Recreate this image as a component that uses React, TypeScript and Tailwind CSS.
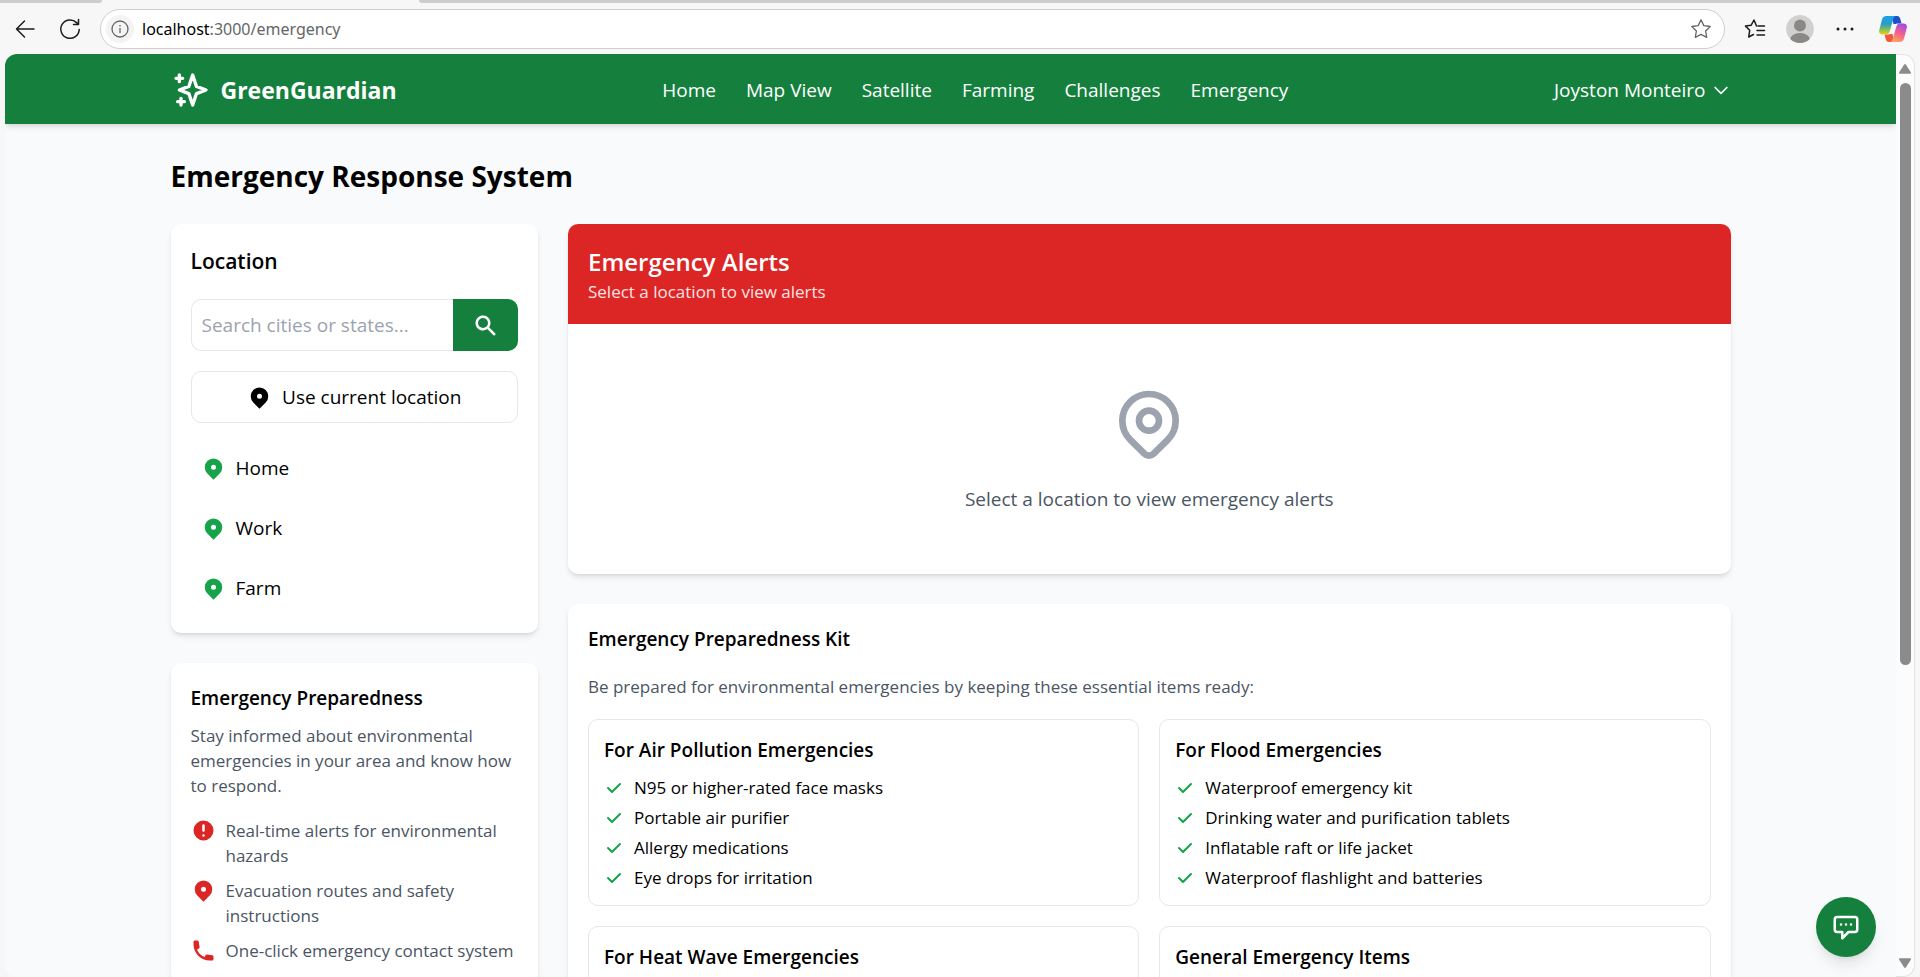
import React from "react";
import {
  HiCheck,
  HiExclamationCircle,
  HiLocationMarker,
  HiOutlineChatAlt,
  HiOutlineChevronDown,
  HiOutlineLocationMarker,
  HiOutlineSparkles,
  HiPhone,
  HiSearch,
} from "react-icons/hi";

const navLinks = ["Home", "Map View", "Satellite", "Farming", "Challenges", "Emergency"];

const savedPlaces = ["Home", "Work", "Farm"];

const features = [
  { icon: HiExclamationCircle, text: "Real-time alerts for environmental hazards" },
  { icon: HiLocationMarker, text: "Evacuation routes and safety instructions" },
  { icon: HiPhone, text: "One-click emergency contact system" },
];

const kits = [
  {
    title: "For Air Pollution Emergencies",
    items: ["N95 or higher-rated face masks", "Portable air purifier", "Allergy medications", "Eye drops for irritation"],
  },
  {
    title: "For Flood Emergencies",
    items: [
      "Waterproof emergency kit",
      "Drinking water and purification tablets",
      "Inflatable raft or life jacket",
      "Waterproof flashlight and batteries",
    ],
  },
  { title: "For Heat Wave Emergencies", items: [] },
  { title: "General Emergency Items", items: [] },
];

const starPath = "M12 2.8l2.8 5.8 6.4.9-4.6 4.5 1.1 6.3L12 17.3l-5.7 3 1.1-6.3-4.6-4.5 6.4-.9z";

function CopilotLogo() {
  return (
    <svg viewBox="0 0 28 26" className="h-[26px] w-7" aria-hidden="true">
      <defs>
        <linearGradient id="cpLeft" x1="0" y1="0" x2="0" y2="1">
          <stop offset="0" stopColor="#1a9ef0" />
          <stop offset="0.45" stopColor="#2b9fc0" />
          <stop offset="0.75" stopColor="#8cc152" />
          <stop offset="1" stopColor="#e8d21d" />
        </linearGradient>
        <linearGradient id="cpRight" x1="0.7" y1="0" x2="0.3" y2="1">
          <stop offset="0" stopColor="#a04be8" />
          <stop offset="0.5" stopColor="#f2608f" />
          <stop offset="1" stopColor="#ffa65a" />
        </linearGradient>
      </defs>
      <path d="M13 0h5c2 0 2.700 1 3.300 3l1.200 4.500h-4c-2 0-3 1-3.600 3z" fill="#1c50c8" />
      <path d="M15 26h-5c-2 0-2.700-1-3.300-3L5.500 18.500h4c2 0 3-1 3.600-3z" fill="#ee5a3a" />
      <path
        d="M7.500 0H17c-1.500 0-2.200 1.500-2.800 3.500l-3.400 11.500c-.7 2.400-1.800 3.500-4 3.500H4c-3.500 0-4.500-2-3.600-5L3 3.500C3.700 1.200 5 0 7.500 0z"
        fill="url(#cpLeft)"
      />
      <path
        d="M20.500 26H11c1.500 0 2.200-1.500 2.800-3.500L17.200 11c.7-2.400 1.800-3.500 4-3.500H24c3.500 0 4.500 2 3.600 5L25 22.500c-.7 2.300-2 3.500-4.500 3.500z"
        fill="url(#cpRight)"
      />
      <path d="M14.800 8h3.200c-.8.6-1.200 1.600-1.600 3l-1.600 5.500c-.4 1.200-.9 1.500-1.600 1.500h-3c.8-.6 1.200-1.600 1.600-3l1.600-5.500c.3-1 .8-1.500 1.400-1.500z" fill="#f7f7f7" />
    </svg>
  );
}

function BrowserBar() {
  return (
    <div className="flex h-[54px] shrink-0 flex-col bg-[#f7f7f7]">
      <div className="flex h-[3px] shrink-0">
        <div className="w-[102px] shrink-0 rounded-br-md bg-[#cdcdcd]" />
        <div className="ml-[317px] flex-1 rounded-bl-md bg-[#cdcdcd]" />
      </div>
      <div className="flex items-center pt-[6px] pl-[14px]">
        <button aria-label="Back" className="flex size-6 items-center justify-center">
          <svg viewBox="0 0 24 24" className="size-6" fill="none" stroke="#1b1b1b" strokeWidth="1.500" strokeLinecap="round" strokeLinejoin="round">
            <path d="M20 12H3M10.500 4L2.500 12l8 8" />
          </svg>
        </button>
        <button aria-label="Refresh" className="ml-5 flex size-6 items-center justify-center">
          <svg viewBox="0 0 24 24" className="size-6" fill="none" stroke="#1b1b1b" strokeWidth="1.500" strokeLinecap="round" strokeLinejoin="round">
            <path d="M21.200 12.500A9.200 9.200 0 1 1 18.500 5.600l1.500 1.600M20.500 2.500v5h-5" />
          </svg>
        </button>
        <div className="ml-[18px] flex h-10 flex-1 items-center rounded-full border border-[#cfcfcf] bg-white pr-[11px] pl-[5px]">
          <span className="flex size-7 items-center justify-center rounded-full bg-[#f3f3f3]">
            <svg viewBox="0 0 18 18" className="size-[18px]" fill="none" stroke="#666" strokeWidth="1.300">
              <circle cx="9" cy="9" r="8" />
              <path d="M9 8v5M9 5v1.400" />
            </svg>
          </span>
          <span className="ml-2 flex-1 font-['Noto_Sans',sans-serif] text-[16px] leading-6 text-[#666]">
            <span className="text-black">localhost</span>:3000/emergency
          </span>
          <button aria-label="Add to favourites">
            <svg viewBox="0 0 24 24" className="size-6" fill="none" stroke="#666" strokeWidth="1.300" strokeLinejoin="round">
              <path d={starPath} />
            </svg>
          </button>
        </div>
        <button aria-label="Favourites" className="ml-[18px]">
          <svg viewBox="0 0 24 24" className="size-6" fill="none" stroke="#1b1b1b" strokeWidth="1.500" strokeLinecap="round" strokeLinejoin="round">
            <path d="M13.500 9L11 3 8.200 8.200l-5.700.9 4.200 4.200-1 6.700 4.800-2.500M15 9h6.500M14 13.500h7.500M14 18h7.500" />
          </svg>
        </button>
        <button aria-label="Profile" className="ml-[19px]">
          <svg viewBox="0 0 28 28" className="size-7">
            <clipPath id="avatarClip">
              <circle cx="14" cy="14" r="14" />
            </clipPath>
            <g clipPath="url(#avatarClip)">
              <circle cx="14" cy="14" r="14" fill="#d2d0ce" />
              <circle cx="14" cy="10.500" r="6" fill="#8a8886" />
              <ellipse cx="14" cy="25" rx="10" ry="7" fill="#8a8886" />
            </g>
          </svg>
        </button>
        <button aria-label="Settings and more" className="ml-[19px]">
          <svg viewBox="0 0 24 24" className="size-6" fill="#1b1b1b">
            <circle cx="5" cy="12" r="1.500" />
            <circle cx="12" cy="12" r="1.500" />
            <circle cx="19" cy="12" r="1.500" />
          </svg>
        </button>
        <button aria-label="Copilot" className="mr-[13px] ml-[22px]">
          <CopilotLogo />
        </button>
      </div>
    </div>
  );
}

function Scrollbar() {
  return (
    <div aria-hidden="true" className="flex w-[19px] shrink-0 flex-col items-center rounded-r-xl border-t border-r border-b border-[#e3e3e3] bg-[#fcfcfc] pt-[9px] pb-[8px]">
      <svg viewBox="0 0 12 10" className="h-[10px] w-3 shrink-0" fill="#8b8b8b">
        <path d="M5 .8a1.200 1.200 0 0 1 2 0l4.800 7.400c.5.800 0 1.600-1 1.600H1.200c-1 0-1.500-.8-1-1.600z" />
      </svg>
      <div className="mt-[9px] h-[582px] w-[11px] rounded-full bg-[#8b8b8b]" />
      <svg viewBox="0 0 12 10" className="mt-auto h-[10px] w-3 shrink-0 rotate-180" fill="#8b8b8b">
        <path d="M5 .8a1.200 1.200 0 0 1 2 0l4.800 7.400c.5.800 0 1.600-1 1.600H1.200c-1 0-1.500-.8-1-1.600z" />
      </svg>
    </div>
  );
}

function SiteHeader() {
  return (
    <header className="relative h-[70px] shrink-0 rounded-tl-lg bg-[#15803d] text-white shadow-md">
      <div className="mx-auto flex h-full max-w-[1600px] items-center justify-between px-5 pt-[2px]">
        <a href="#" className="flex items-center gap-[10px] text-[23px] font-bold">
          <HiOutlineSparkles className="size-10" />
          GreenGuardian
        </a>
        <nav className="flex gap-[30px] text-[19px]">
          {navLinks.map((label) => (
            <a key={label} href="#">
              {label}
            </a>
          ))}
        </nav>
        <button className="flex items-center gap-[5px] text-[19px]">
          Joyston Monteiro
          <HiOutlineChevronDown className="size-5" />
        </button>
      </div>
    </header>
  );
}

function LocationCard() {
  return (
    <section className="rounded-[10px] bg-white p-5 shadow-md">
      <h2 className="mb-5 text-[21px] leading-[35px] font-semibold">Location</h2>
      <form className="flex h-[52px]" onSubmit={(e) => e.preventDefault()}>
        <input
          type="text"
          aria-label="Search cities or states"
          placeholder="Search cities or states..."
          className="min-w-0 flex-1 rounded-l-[10px] border border-r-0 border-[#e5e7eb] px-[10px] text-[19px] placeholder:text-[#9ca3af]"
        />
        <button aria-label="Search" className="flex w-[65px] items-center justify-center rounded-r-[10px] bg-[#15803d] text-white">
          <HiSearch className="size-[25px]" />
        </button>
      </form>
      <button className="mt-5 flex h-[52px] w-full items-center justify-center gap-[10px] rounded-[10px] border border-[#e5e7eb] text-[19px]">
        <HiLocationMarker className="size-[25px]" />
        Use current location
      </button>
      <ul className="mt-5 flex flex-col gap-[10px]">
        {savedPlaces.map((place) => (
          <li key={place}>
            <button className="flex h-[50px] w-full items-center gap-[10px] px-[10px] text-[19px]">
              <HiLocationMarker className="size-[25px] text-[#16a34a]" />
              {place}
            </button>
          </li>
        ))}
      </ul>
    </section>
  );
}

function PreparednessCard() {
  return (
    <section className="rounded-[10px] bg-white p-5 shadow-md">
      <h3 className="mb-[10px] text-[19px] leading-[30px] font-semibold">Emergency Preparedness</h3>
      <p className="mb-5 text-[17px] leading-[25px] text-[#4b5563]">
        Stay informed about environmental emergencies in your area and know how to respond.
      </p>
      <ul className="flex flex-col gap-[10px] text-[17px] leading-[25px] text-[#4b5563]">
        {features.map(({ icon: Icon, text }) => (
          <li key={text} className="flex items-start gap-[10px]">
            <Icon className="size-[25px] shrink-0 text-[#dc2626]" />
            {text}
          </li>
        ))}
      </ul>
    </section>
  );
}

function AlertsCard() {
  return (
    <section className="overflow-hidden rounded-[10px] bg-white shadow-md">
      <div className="bg-[#dc2626] p-5 text-white">
        <h2 className="text-[24px] leading-[35px] font-semibold">Emergency Alerts</h2>
        <p className="text-[17px] leading-[25px] text-[#fee2e2]">Select a location to view alerts</p>
      </div>
      <div className="flex flex-col items-center px-5 py-[60px]">
        <HiOutlineLocationMarker className="size-20 text-[#9ca3af]" />
        <p className="mt-5 text-[19px] leading-[30px] text-[#4b5563]">Select a location to view emergency alerts</p>
      </div>
    </section>
  );
}

function KitCard() {
  return (
    <section className="rounded-[10px] bg-white p-5 shadow-md">
      <h3 className="mb-5 text-[19px] leading-[30px] font-semibold">Emergency Preparedness Kit</h3>
      <p className="mb-5 text-[17px] leading-[25px] text-[#4b5563]">
        Be prepared for environmental emergencies by keeping these essential items ready:
      </p>
      <div className="grid grid-cols-2 gap-5">
        {kits.map(({ title, items }) => (
          <article key={title} className="rounded-[10px] border border-[#e5e7eb] p-[15px]">
            <h4 className="mb-[10px] text-[19px] leading-[30px] font-semibold">{title}</h4>
            <ul className="flex flex-col gap-[5px] text-[17px] leading-[25px]">
              {items.map((item) => (
                <li key={item} className="flex items-center gap-[10px]">
                  <HiCheck className="size-5 text-[#16a34a]" />
                  {item}
                </li>
              ))}
            </ul>
          </article>
        ))}
      </div>
    </section>
  );
}

export default function App() {
  return (
    <div className="flex h-screen flex-col overflow-hidden bg-[#f7f7f7] font-['Open_Sans','Noto_Sans',sans-serif] text-black">
      <BrowserBar />
      <div className="flex min-h-0 flex-1 px-[5px]">
        <div className="relative flex min-w-0 flex-1 flex-col overflow-hidden rounded-l-xl bg-[#f9fafb]">
          <SiteHeader />
          <main className="mx-auto w-full max-w-[1600px] px-5 pt-[30px]">
            <h1 className="mb-[25px] text-[28px] leading-[45px] font-bold">Emergency Response System</h1>
            <div className="grid grid-cols-4 items-start gap-[30px]">
              <div className="flex flex-col gap-[30px]">
                <LocationCard />
                <PreparednessCard />
              </div>
              <div className="col-span-3 flex flex-col gap-[30px]">
                <AlertsCard />
                <KitCard />
              </div>
            </div>
          </main>
          <button
            aria-label="Open chat"
            className="absolute right-5 bottom-5 flex size-[60px] items-center justify-center rounded-full bg-[#15803d] text-white shadow-lg"
          >
            <HiOutlineChatAlt className="size-[30px]" />
          </button>
        </div>
        <Scrollbar />
      </div>
    </div>
  );
}
